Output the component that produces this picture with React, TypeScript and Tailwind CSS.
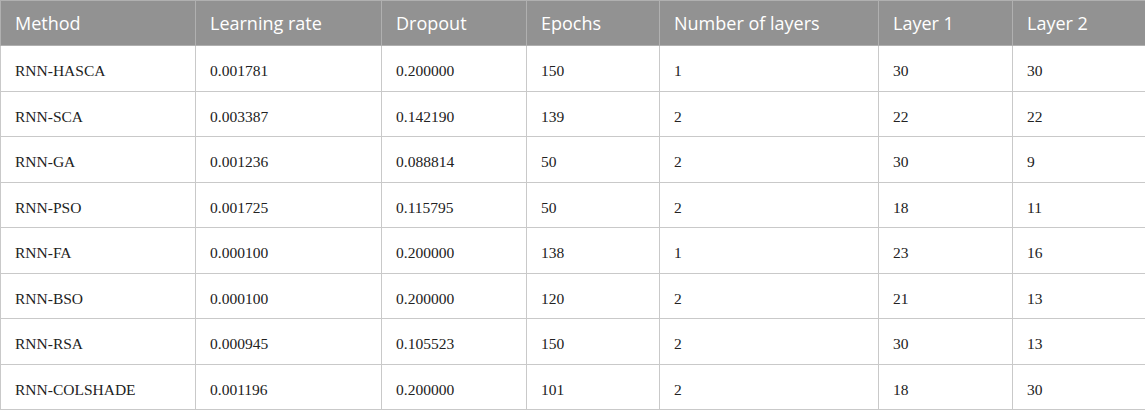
const headers = ["Method", "Learning rate", "Dropout", "Epochs", "Number of layers", "Layer 1", "Layer 2"];

const widths = ["w-[195px]", "w-[186px]", "w-[145px]", "w-[133px]", "w-[219px]", "w-[134px]", "w-[133px]"];

const rows = [
  ["RNN-HASCA", "0.001781", "0.200000", "150", "1", "30", "30"],
  ["RNN-SCA", "0.003387", "0.142190", "139", "2", "22", "22"],
  ["RNN-GA", "0.001236", "0.088814", "50", "2", "30", "9"],
  ["RNN-PSO", "0.001725", "0.115795", "50", "2", "18", "11"],
  ["RNN-FA", "0.000100", "0.200000", "138", "1", "23", "16"],
  ["RNN-BSO", "0.000100", "0.200000", "120", "2", "21", "13"],
  ["RNN-RSA", "0.000945", "0.105523", "150", "2", "30", "13"],
  ["RNN-COLSHADE", "0.001196", "0.200000", "101", "2", "18", "30"],
];

export default function App() {
  return (
    <div className="w-[1145px] h-[410px] bg-white overflow-hidden">
      <table className="table-fixed w-[1145px] border-collapse">
        <colgroup>
          {widths.map((w, i) => (
            <col key={i} className={w} />
          ))}
        </colgroup>
        <thead>
          <tr className="h-[45px] bg-[#929292]">
            {headers.map((h) => (
              <th
                key={h}
                className="border border-[#b0b0b0] px-[14px] text-left align-middle font-normal text-white text-[18px] font-['Open_Sans',sans-serif]"
              >
                {h}
              </th>
            ))}
          </tr>
        </thead>
        <tbody>
          {rows.map((r) => (
            <tr key={r[0]} className="h-[45.5px]">
              {r.map((c, i) => (
                <td
                  key={i}
                  className="border border-[#c9c9c9] px-[14px] pt-[5px] align-middle text-[15.5px] text-[#222] font-['Liberation_Serif',serif]"
                >
                  {c}
                </td>
              ))}
            </tr>
          ))}
        </tbody>
      </table>
    </div>
  );
}
